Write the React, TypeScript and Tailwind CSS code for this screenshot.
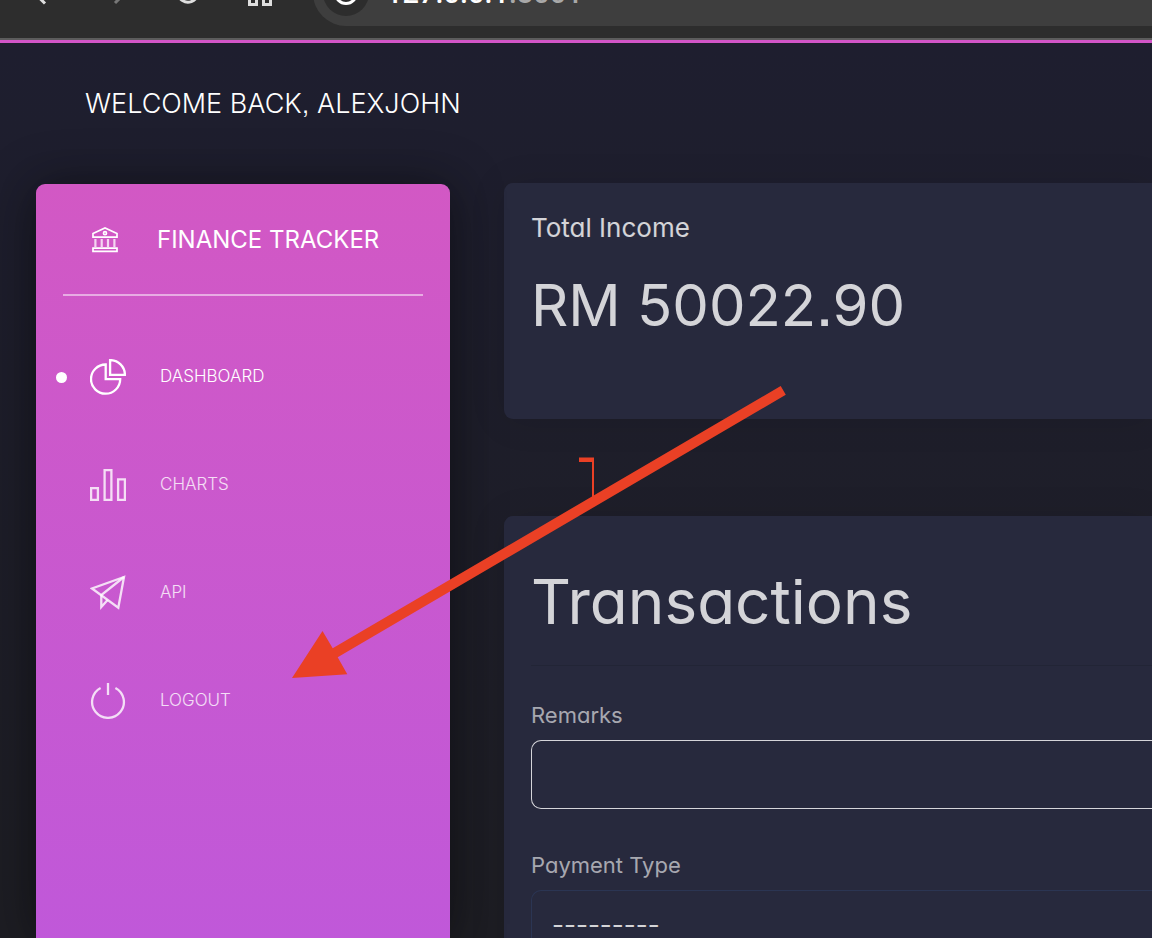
import type { ReactNode } from "react";

function BrowserBar() {
  return (
    <header className="flex h-[40px] shrink-0 items-end overflow-hidden border-b-2 border-[#5c5c5c] bg-[#2d2d2d]">
      <div className="mb-3 flex h-[66px] w-full shrink-0 items-center pl-8">
        <div className="flex shrink-0 gap-12 text-[#dedede]">
          <button aria-label="Back" className="block size-6">
            <svg viewBox="0 0 24 24" fill="none" stroke="currentColor" strokeWidth="3">
              <path d="M13 22.500 2.500 12 13 1.500M2 12H24" />
            </svg>
          </button>
          <button aria-label="Forward" className="block size-6 text-[#777777]">
            <svg viewBox="0 0 24 24" fill="none" stroke="currentColor" strokeWidth="3">
              <path d="M11 22 21 12 11 2M21 12H0" />
            </svg>
          </button>
          <button aria-label="Reload" className="block size-6">
            <svg viewBox="0 0 24 24" fill="none" stroke="currentColor" strokeWidth="3">
              <path d="M21 7A10 10 0 1 0 21.500 14M21 1V8H14" />
            </svg>
          </button>
          <button aria-label="Apps" className="block size-6">
            <svg viewBox="0 0 24 24" fill="none" stroke="currentColor" strokeWidth="3" overflow="visible">
              <path d="M1.500 1.500H8.500V8.500H1.500ZM15.500 1.500H22.500V8.500H15.500ZM1.500 16.500H8.500V23.500H1.500ZM15.500 16.500H22.500V23.500H15.500Z" />
            </svg>
          </button>
        </div>
        <div className="ml-[41px] flex h-[66px] flex-1 items-center gap-[17px] rounded-l-full bg-[#3e3e3e] pl-[10px]">
          <span className="flex size-[46px] shrink-0 items-center justify-center rounded-full bg-[#2d2d2d] text-white">
            <svg className="size-6" viewBox="0 0 24 24" fill="none" stroke="currentColor" strokeWidth="3">
              <circle cx="12" cy="12" r="10.500" />
              <path d="M12 11V17M12 6V9" />
            </svg>
          </span>
          <span className="font-['Roboto',sans-serif] text-[29px] leading-8 font-medium text-white">
            127.0.0.1<span className="text-[#a8a8a8]">:8001</span>
          </span>
        </div>
      </div>
    </header>
  );
}

function BankIcon() {
  return (
    <svg className="size-[26px] shrink-0" viewBox="0 0 26 26" fill="none" stroke="currentColor" strokeWidth="1.7">
      <path d="M1 6.500 13 1 25 6.500V10.200H1Z" />
      <circle cx="13" cy="6.200" r="1.500" />
      <path d="M3.400 12V20M9.700 12V20M16 12V20M22.400 12V20" strokeWidth="2.200" opacity=".75" />
      <path d="M1 21.200H25V24.300H1Z" />
    </svg>
  );
}

function NavIcon({ children }: { children: ReactNode }) {
  return (
    <svg className="size-9 shrink-0" viewBox="0 0 36 36" fill="none" stroke="currentColor" strokeWidth="2.300">
      {children}
    </svg>
  );
}

const links = [
  {
    label: "DASHBOARD",
    active: true,
    icon: (
      <>
        <path d="M15.700 5.500A14.600 14.600 0 1 0 30.200 20.200H15.700Z" />
        <path d="M20.100 1.100A14.800 14.800 0 0 1 34.900 15.900H20.100Z" />
      </>
    ),
  },
  {
    label: "CHARTS",
    active: false,
    icon: <path d="M1.100 21.200H7.900V32.900H1.100ZM14.600 3.100H21.400V32.900H14.600ZM28.100 12.400H34.900V32.900H28.100Z" />,
  },
  {
    label: "API",
    active: false,
    icon: (
      <>
        <path d="M34 2 2 13.500 28.300 32.700Z" />
        <path d="M34 2 11.300 20V32L17.600 25" />
      </>
    ),
  },
  {
    label: "LOGOUT",
    active: false,
    icon: (
      <>
        <path d="M10.600 4.900A15.900 15.900 0 1 0 25.400 4.900" />
        <path d="M18 0V12" />
      </>
    ),
  },
];

function Sidebar() {
  return (
    <aside className="relative mt-px w-[414px] shrink-0 rounded-t-[9px] bg-linear-to-b from-[#d258c4] to-[#c058d9] text-white shadow-[0_4px_40px_rgba(0,0,0,0.2),0_4px_54px_rgba(0,0,0,0.35)]">
      <div className="mx-[27px] flex items-center gap-[39px] border-b-2 border-white/50 pt-9 pb-[34px] pl-[29px]">
        <BankIcon />
        <a href="#home" className="text-[24px] leading-10 whitespace-nowrap">
          FINANCE TRACKER
        </a>
      </div>
      <nav className="mt-[27px] pl-5">
        <ul>
          {links.map(({ label, active, icon }) => (
            <li key={label}>
              <a
                href={`#${label.toLowerCase()}`}
                className={`flex h-[108px] items-center text-[17px] font-light ${active ? "text-white" : "text-white/80"}`}
              >
                <span className={`mr-[23px] size-[11px] rounded-full ${active ? "bg-white" : ""}`} />
                <NavIcon>{icon}</NavIcon>
                <span className="ml-[34px]">{label}</span>
              </a>
            </li>
          ))}
        </ul>
      </nav>
    </aside>
  );
}

function Card({ children }: { children: ReactNode }) {
  return (
    <section className="rounded-l-[9px] bg-[#27293d] pl-[27px] shadow-[0_2px_36px_rgba(0,0,0,0.1)]">{children}</section>
  );
}

function Annotation() {
  return (
    <svg className="pointer-events-none absolute top-0 left-0" width="800" height="700" viewBox="0 0 800 700" fill="#ea4025" aria-hidden="true">
      <path d="M780.700 386 785.800 394.700 337.700 657.300 347.300 674.300 292 678 322.500 631 332.700 648.300Z" />
      <path d="M579 457.500H594V500H592V462H579Z" />
    </svg>
  );
}

export default function App() {
  return (
    <div className="relative flex h-screen flex-col overflow-hidden bg-[#1e1e24] font-['Inter',sans-serif] [font-feature-settings:'cv11','ss07']">
      <BrowserBar />
      <div className="flex min-h-0 flex-1 flex-col border-t-3 border-[#d255c8] bg-linear-to-b from-[#1e1e2f] to-[#1e1e24]">
        <h1 className="pt-10 pb-[58px] pl-[85px] text-[27px] leading-[42px] font-light text-white">
          WELCOME BACK, ALEXJOHN
        </h1>
        <div className="flex min-h-0 flex-1 gap-[54px] pl-9">
          <Sidebar />
          <main className="flex min-w-0 flex-1 flex-col gap-[97px]">
            <Card>
              <h2 className="pt-[27px] text-[26px] leading-9 text-white/80">Total Income</h2>
              <p className="mt-[23px] pb-[78px] text-[58px] leading-[72px] whitespace-nowrap text-white/80">RM 50022.90</p>
            </Card>
            <Card>
              <h2 className="border-b border-[#222536] pt-[50px] pb-[27px] text-[62px] leading-[72px] text-white/80">
                Transactions
              </h2>
              <form className="flex flex-col gap-10 pt-[33px] pb-10">
                <div className="flex flex-col gap-[9px]">
                  <label htmlFor="remarks" className="text-[22px] leading-8 text-white/60">
                    Remarks
                  </label>
                  <input
                    id="remarks"
                    type="text"
                    className="h-[69px] w-full rounded-l-[10px] border border-r-0 border-[#d5d5da] bg-transparent px-5 text-[22px] text-white/80 outline-none"
                  />
                </div>
                <div className="flex flex-col gap-[9px]">
                  <label htmlFor="payment-type" className="text-[22px] leading-8 text-white/60">
                    Payment Type
                  </label>
                  <select
                    id="payment-type"
                    className="h-[69px] w-full appearance-none rounded-l-[10px] border border-r-0 border-[#2b3553] bg-transparent px-5 text-[26px] text-white/80 outline-none"
                  >
                    <option>---------</option>
                  </select>
                </div>
              </form>
            </Card>
          </main>
        </div>
      </div>
      <Annotation />
    </div>
  );
}
